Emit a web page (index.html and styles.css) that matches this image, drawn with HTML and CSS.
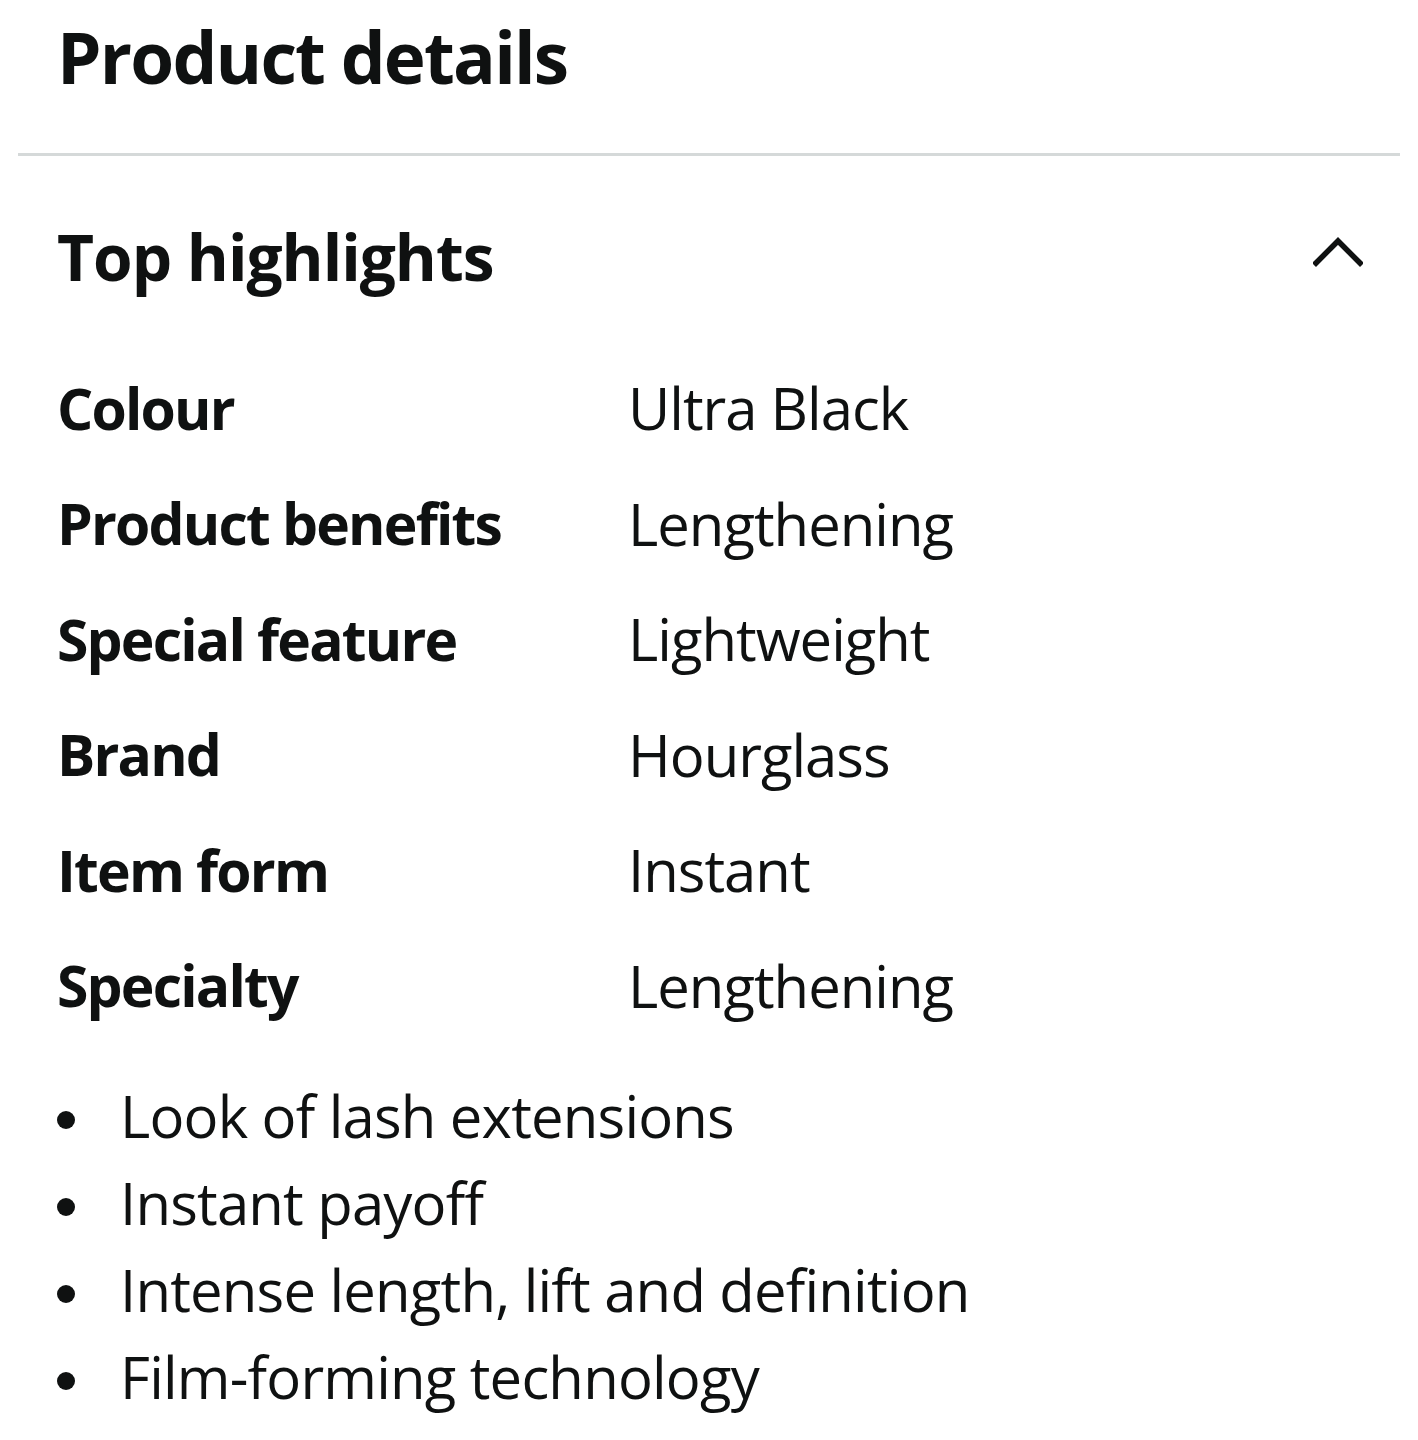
FILE: index.html
```html
<!DOCTYPE html>
<html lang="en">
<head>
<meta charset="utf-8">
<title>Product details</title>
<link rel="stylesheet" href="styles.css">
</head>
<body>
<main class="page">
  <h1 class="title">Product details</h1>
  <hr class="divider">
  <section class="highlights">
    <div class="hl-head">
      <h2 class="hl-title">Top highlights</h2>
      <svg class="chevron" width="50" height="30" viewBox="0 0 50 30" aria-hidden="true">
        <polyline points="3,26 25,4 47,26" fill="none" stroke="#0f1111" stroke-width="5.5" stroke-linecap="square"/>
      </svg>
    </div>
    <dl class="specs">
      <div class="row"><dt>Colour</dt><dd>Ultra Black</dd></div>
      <div class="row"><dt>Product benefits</dt><dd>Lengthening</dd></div>
      <div class="row"><dt>Special feature</dt><dd>Lightweight</dd></div>
      <div class="row"><dt>Brand</dt><dd>Hourglass</dd></div>
      <div class="row"><dt>Item form</dt><dd>Instant</dd></div>
      <div class="row"><dt>Specialty</dt><dd>Lengthening</dd></div>
    </dl>
    <ul class="bullets">
      <li>Look of lash extensions</li>
      <li>Instant payoff</li>
      <li>Intense length, lift and definition</li>
      <li>Film-forming technology</li>
    </ul>
  </section>
</main>
</body>
</html>
```
FILE: styles.css
```css
* { box-sizing: border-box; }
html, body { margin: 0; padding: 0; background: #ffffff; }
body {
  font-family: "Open Sans", "Noto Sans", sans-serif;
  color: #0f1111;
}
.page { width: 1418px; }
.title {
  margin: 0;
  padding: 7px 57px 0;
  font-size: 71px;
  font-weight: 700;
  line-height: 100px;
  letter-spacing: -1.8px;
}
.divider {
  margin: 46px 18px 0;
  border: 0;
  height: 3px;
  background: #d5d9d9;
}
.highlights { padding: 0 55px 0 57px; }
.hl-head {
  display: flex;
  justify-content: space-between;
  align-items: center;
  margin-top: 58px;
}
.hl-title {
  margin: 0;
  font-size: 64px;
  font-weight: 700;
  line-height: 86px;
  letter-spacing: -1px;
}
.chevron { margin-bottom: 10px; }
.specs { margin: 50px 0 0; }
.row {
  display: grid;
  grid-template-columns: 571px 1fr;
  height: 115.5px;
  align-items: center;
}
.row dt {
  font-weight: 700;
  font-size: 57px;
  letter-spacing: -1.8px;
}
.row dd {
  margin: 0;
  font-size: 58px;
  letter-spacing: -1px;
}
.bullets {
  list-style: none;
  margin: 29px 0 0;
  padding: 0;
}
.bullets li {
  position: relative;
  padding-left: 63px;
  font-size: 58px;
  line-height: 87px;
  letter-spacing: -0.8px;
}
.bullets li::before {
  content: "";
  position: absolute;
  left: 0;
  top: 39px;
  width: 18px;
  height: 18px;
  border-radius: 50%;
  background: #0f1111;
}
```
